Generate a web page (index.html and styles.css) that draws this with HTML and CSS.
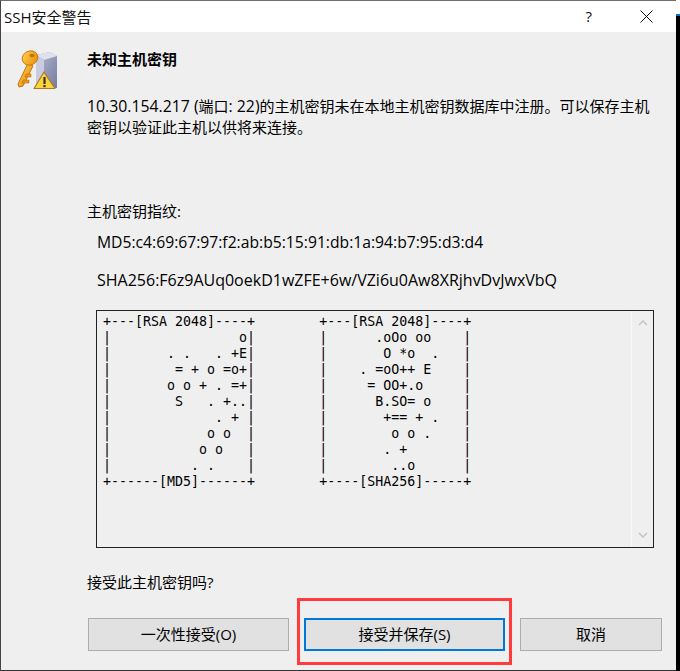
FILE: index.html
```html
<!DOCTYPE html>
<html lang="zh-CN">
<head>
    <meta charset="UTF-8">
    <title>SSH安全警告</title>
    <link rel="stylesheet" href="styles.css">
</head>
<body>
    <div class="window">
        <div class="titlebar">
            <span class="title">SSH安全警告</span>
            <div class="title-buttons">
                <span class="help">?</span>
                <svg class="close" width="13" height="13" viewBox="0 0 13 13">
                    <path d="M0.5 0.5L12.5 12.5M12.5 0.5L0.5 12.5" stroke="#111" stroke-width="1" fill="none"/>
                </svg>
            </div>
        </div>
        <div class="content">
            <div class="head">
                <svg class="key-icon" width="42" height="42" viewBox="0 0 42 42">
                    <defs>
                        <linearGradient id="side" x1="0" y1="0" x2="1" y2="1">
                            <stop offset="0" stop-color="#b4b8d2"/>
                            <stop offset="1" stop-color="#767b9f"/>
                        </linearGradient>
                        <linearGradient id="gold" x1="0" y1="0" x2="1" y2="1">
                            <stop offset="0" stop-color="#ffd648"/>
                            <stop offset="1" stop-color="#ea8408"/>
                        </linearGradient>
                    </defs>
                    <path d="M19 5L33 2L40 6V38L19 39Z" fill="url(#side)"/>
                    <path d="M19 5L33 2L40 6L27 10Z" fill="#dfe1ec"/>
                    <path d="M19 5L27 10V38H19Z" fill="#c9cce0"/>
                    <path d="M11 13L16 16L6 36L2 37L1 34Z" fill="url(#gold)" stroke="#ad5f08" stroke-width="0.8"/>
                    <path d="M9 24H14V27H8ZM6 30H12V33H5Z" fill="#ef9614" stroke="#ad5f08" stroke-width="0.5"/>
                    <ellipse cx="13" cy="8" rx="8" ry="7" transform="rotate(-25 13 8)" fill="url(#gold)" stroke="#bd7208" stroke-width="0.8"/>
                    <ellipse cx="15" cy="5.5" rx="2.5" ry="1.8" fill="#b8740f"/>
                    <path d="M27 22L38 38.500H17Z" fill="#fbd33a" stroke="#a8792a" stroke-width="1.2" stroke-linejoin="round"/>
                    <path d="M27.500 27V34" stroke="#3a3320" stroke-width="2.200"/>
                    <rect x="26.400" y="35" width="2.200" height="2.200" fill="#3a3320"/>
                </svg>
                <div class="heading">未知主机密钥</div>
            </div>
            <p class="desc"><span class="latin">10.30.154.217 (</span>端口<span class="latin">: 22)</span>的主机密钥未在本地主机密钥数据库中注册。可以保存主机<br>密钥以验证此主机以供将来连接。</p>
            <div class="label fp-label">主机密钥指纹:</div>
            <div class="fingerprint md5">MD5:c4:69:67:97:f2:ab:b5:15:91:db:1a:94:b7:95:d3:d4</div>
            <div class="fingerprint sha">SHA256:F6z9AUq0oekD1wZFE+6w/VZi6u0Aw8XRjhvDvJwxVbQ</div>
            <div class="art-box">
<pre class="art">+---[RSA 2048]----+        +---[RSA 2048]----+
|                o|        |      .oOo oo    |
|       . .   . +E|        |       O *o  .   |
|        = + o =o+|        |    . =oO++ E    |
|       o o + . =+|        |     = OO+.o     |
|        S   . +..|        |      B.SO= o    |
|             . + |        |       +== + .   |
|            o o  |        |        o o .    |
|           o o   |        |       . +       |
|          . .    |        |        ..o      |
+------[MD5]------+        +----[SHA256]-----+</pre>
                <div class="scrollbar">
                    <svg width="10" height="6" viewBox="0 0 10 6"><path d="M1 5L5 1L9 5" stroke="#c4c4c4" stroke-width="1.500" fill="none"/></svg>
                    <svg width="10" height="6" viewBox="0 0 10 6"><path d="M1 1L5 5L9 1" stroke="#c4c4c4" stroke-width="1.500" fill="none"/></svg>
                </div>
            </div>
            <div class="label question">接受此主机密钥吗?</div>
            <div class="buttons">
                <button class="btn btn-once">一次性接受(O)</button>
                <button class="btn btn-save">接受并保存(S)</button>
                <button class="btn btn-cancel">取消</button>
            </div>
            <!-- red annotation drawn over the screenshot -->
            <div class="highlight"></div>
        </div>
    </div>
    <div class="backdrop"></div>
</body>
</html>
```

FILE: styles.css
```css
* {
    box-sizing: border-box;
}

html, body {
    margin: 0;
    padding: 0;
}

body {
    width: 680px;
    height: 671px;
    overflow: hidden;
    display: flex;
    font-family: "Open Sans", "Noto Sans CJK SC", sans-serif;
    font-size: 15px;
    color: #000;
}

.window {
    width: 676px;
    height: 671px;
    flex: none;
    display: flex;
    flex-direction: column;
    border-left: 1px solid #444;
    border-bottom: 1px solid #333;
    border-top: 1px solid #6e6e6e;
    background-color: #f0f0f0;
}

.backdrop {
    flex: 1;
    background: linear-gradient(#fff 14px, #0078d7 14px, #0078d7 16px, #000 16px);
}

.titlebar {
    height: 31px;
    flex: none;
    display: flex;
    align-items: center;
    justify-content: space-between;
    background-color: #fff;
    padding-left: 3px;
    color: #111;
}

.title-buttons {
    display: flex;
    align-items: center;
}

.help {
    margin-right: 48px;
    margin-bottom: 2px;
}

.close {
    margin-right: 23px;
}

.content {
    flex: 1;
    position: relative;
    padding: 0 14px 0 86px;
    background-color: #efefef;
}

.head {
    height: 44px;
    padding-top: 16px;
}

.key-icon {
    position: absolute;
    left: 16px;
    top: 18px;
}

.heading {
    font-weight: bold;
    line-height: 22px;
}

.desc {
    margin: 20px 0 0;
    line-height: 21px;
    white-space: nowrap;
}

.latin {
    font-size: 15.8px;
}

.label {
    line-height: 22px;
}

.fp-label {
    margin-top: 62px;
}

.fingerprint {
    margin-left: 10px;
    line-height: 22px;
}

.md5 {
    margin-top: 9px;
    font-size: 15.7px;
}

.sha {
    margin-top: 16px;
    font-size: 16px;
}

.art-box {
    width: 558px;
    height: 238px;
    margin-top: 19px;
    margin-left: 9px;
    border: 1px solid #222;
    display: flex;
    justify-content: space-between;
}

.art {
    margin: 3px 0 0 6px;
    font-family: "DejaVu Sans Mono", monospace;
    font-size: 13.3px;
    line-height: 16px;
}

.scrollbar {
    width: 22px;
    border-left: 1px solid #f8f8f8;
    display: flex;
    flex-direction: column;
    justify-content: space-between;
    align-items: center;
    padding: 9px 0;
}

.question {
    margin-top: 23px;
}

.buttons {
    display: flex;
    gap: 15px;
    margin: 25px 0 0 1px;
}

.btn {
    height: 33px;
    padding: 0 0 2px;
    font-family: inherit;
    font-size: 15px;
    color: #000;
    background-color: #e1e1e1;
    border: 1px solid #adadad;
}

.btn-once,
.btn-save {
    width: 201px;
}

.btn-save {
    border: 2px solid #0078d7;
}

.btn-cancel {
    width: 142px;
}

.highlight {
    position: absolute;
    left: 296px;
    top: 566px;
    width: 215px;
    height: 67px;
    border: 3px solid #ff3b3b;
}
```
